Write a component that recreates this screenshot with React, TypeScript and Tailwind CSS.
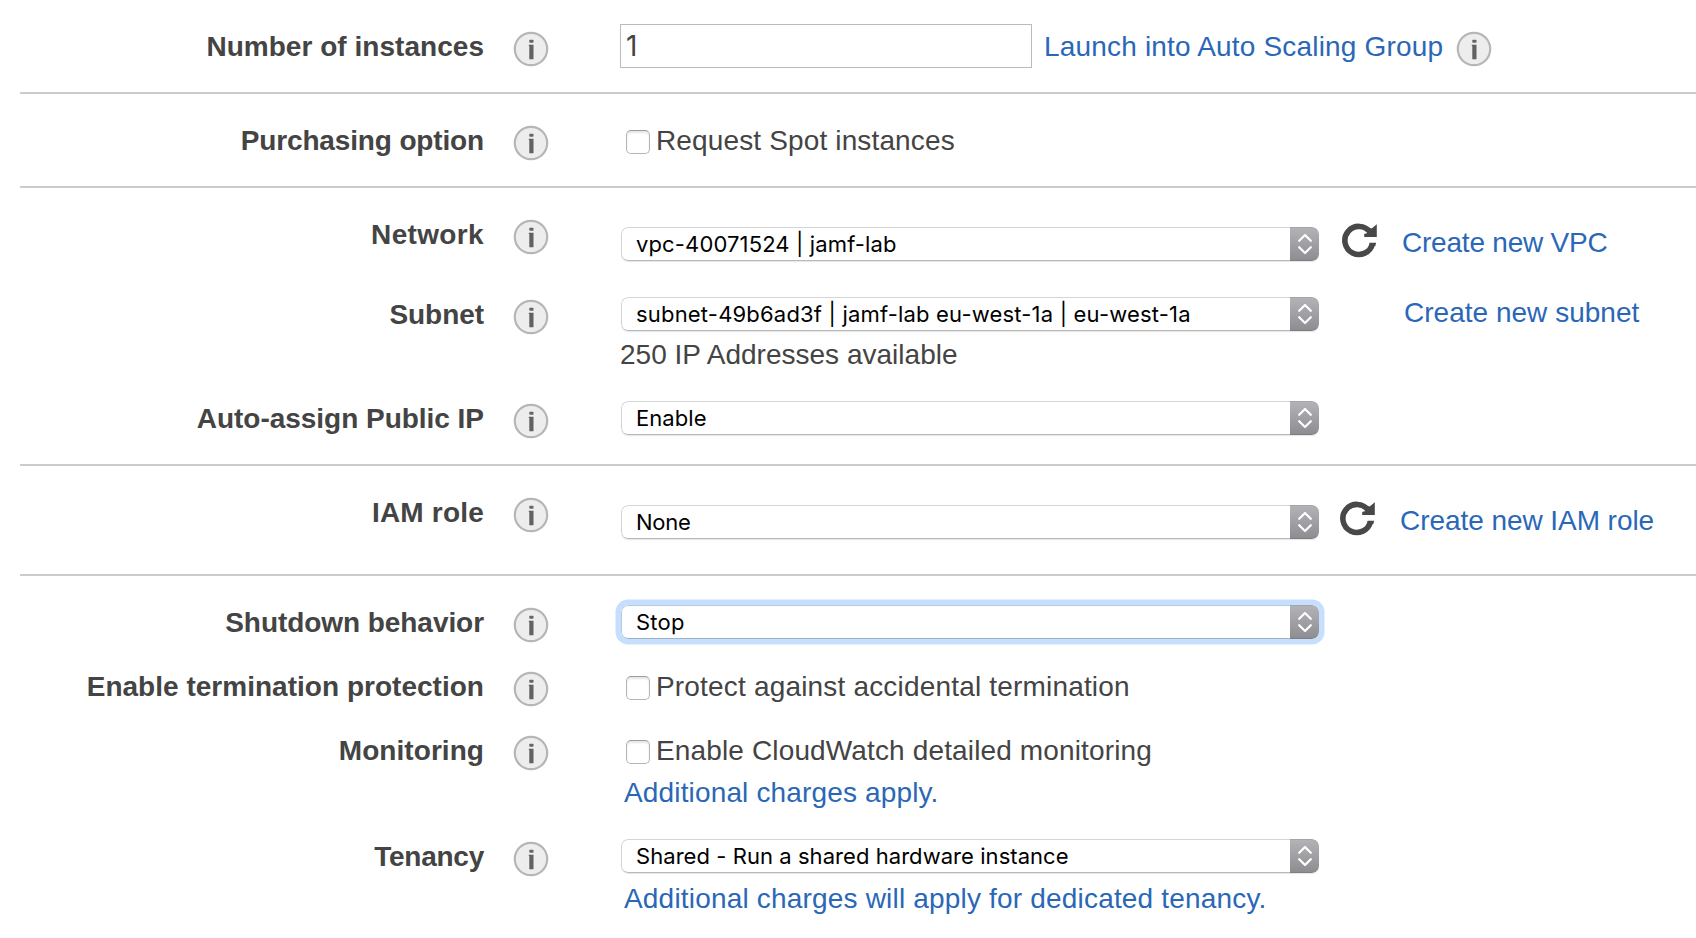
import type { ReactNode } from "react";

function InfoIcon({ className = "" }: { className?: string }) {
  return (
    <svg viewBox="0 0 36 36" className={`h-9 w-9 shrink-0 ${className}`} aria-hidden="true">
      <circle cx="18" cy="18" r="16.2" fill="#ededed" stroke="#b6b6b6" strokeWidth="2.2" />
      <rect x="16.3" y="8.7" width="4.2" height="3" rx="0.8" fill="#666" />
      <path d="M15.8 13.8h4.7v14.4h-4.2V15h-.5z" fill="#626262" />
    </svg>
  );
}

function RefreshIcon({ className = "" }: { className?: string }) {
  return (
    <svg viewBox="0 0 36 36" className={`h-9 w-9 shrink-0 ${className}`} aria-hidden="true">
      <path d="M29.2 10.2A14 14 0 1 0 31.5 21.6" fill="none" stroke="#484848" strokeWidth="5.6" />
      <path d="M28.6 20.8h6.6l-1 3.4-5.8-.8z" fill="#484848" />
      <path d="M35.8 2.2v12.8H23.2v-3l4-1.2-1-4 4.8-.6z" fill="#484848" />
    </svg>
  );
}

type RowProps = {
  label: string;
  labelClass?: string;
  className: string;
  children: ReactNode;
};

function Row({ label, labelClass = "", className, children }: RowProps) {
  return (
    <div className={`flex items-start ${className}`}>
      <div className={`w-[484px] shrink-0 text-right font-bold ${labelClass}`}>{label}</div>
      <InfoIcon className="mt-px ml-[29px]" />
      <div className="ml-[71px] flex flex-col items-start">{children}</div>
    </div>
  );
}

function Section({ className, children }: { className: string; children: ReactNode }) {
  return (
    <section className={`ml-5 border-b-2 border-[#cbcbcb] pt-[30px] ${className}`}>
      <div className="-ml-5">{children}</div>
    </section>
  );
}

function Select({ value, className = "", focused = false }: { value: string; className?: string; focused?: boolean }) {
  return (
    <button
      type="button"
      className={`ml-px flex h-[34px] w-[698px] shrink-0 overflow-hidden rounded-[7px] text-left ${
        focused
          ? "shadow-[0_0_0_5.5px_#c5dffd]"
          : "shadow-[0_1px_1px_rgba(0,0,0,0.1)]"
      }`}
    >
      <span
        className={`h-[34px] flex-1 rounded-l-[7px] border border-r-0 bg-white pl-[14px] font-[Inter,sans-serif] text-[22px] leading-[33px] whitespace-nowrap text-black ${
          focused ? "border-[#b5cbe5] border-b-[#9fb2ca]" : "border-[#d4d4d4] border-b-[#b8b8b8]"
        } ${className}`}
      >
        {value}
      </span>
      <span className="flex h-[34px] w-[29px] items-center justify-center rounded-r-[7px] border-t border-b border-t-[#a5a4a9] border-b-[#7f7e83] bg-linear-to-b from-[#b3b2b7] to-[#8e8d92]">
        <svg viewBox="0 0 14 22" className="h-[22px] w-[14px]" fill="none" stroke="#fff" strokeWidth="2.2" strokeLinecap="round" strokeLinejoin="round" aria-hidden="true">
          <path d="M1.2 7.8 7 2l5.8 5.8M1.2 14.2 7 20l5.8-5.8" />
        </svg>
      </span>
    </button>
  );
}

function Checkbox({ label, className }: { label: string; className: string }) {
  return (
    <label className="flex items-start">
      <input
        type="checkbox"
        className="mt-[6px] ml-[6px] h-6 w-6 shrink-0 appearance-none rounded-[5px] border border-[#b4b4b4] border-t-[#9d9d9d] bg-white shadow-[inset_0_2px_2px_rgba(0,0,0,0.1)]"
      />
      <span className={`ml-[6px] whitespace-nowrap ${className}`}>{label}</span>
    </label>
  );
}

function Link({ className, children }: { className: string; children: ReactNode }) {
  return (
    <a href="#" className={`shrink-0 whitespace-nowrap text-[#2a67b7] ${className}`}>
      {children}
    </a>
  );
}

export default function App() {
  return (
    <main className="h-[938px] w-[1696px] overflow-hidden bg-white font-['Liberation_Sans',Arial,sans-serif] text-[28px] leading-[34px] text-[#444]">
      <Section className="h-[94px]">
        <Row label="Number of instances" labelClass="tracking-[0.035px]" className="h-16">
          <div className="-mt-[6px] flex items-start">
            <input
              type="text"
              defaultValue="1"
              aria-label="Number of instances"
              className="h-11 w-[412px] border border-[#bbb] bg-white pl-[5px] font-[Inter,sans-serif] outline-none"
            />
            <Link className="mt-[6px] ml-[12px] tracking-[0.179px]">Launch into Auto Scaling Group</Link>
            <InfoIcon className="mt-[7px] ml-[13px]" />
          </div>
        </Row>
      </Section>

      <Section className="h-[94px]">
        <Row label="Purchasing option" labelClass="tracking-[-0.15px]" className="h-16">
          <Checkbox label="Request Spot instances" className="tracking-[0.14px]" />
        </Row>
      </Section>

      <Section className="h-[278px]">
        <Row label="Network" labelClass="tracking-[0.35px]" className="h-20">
          <div className="mt-[9px] flex items-start">
            <Select value="vpc-40071524 | jamf-lab" className="tracking-[0.133px]" />
            <RefreshIcon className="-mt-[5px] ml-[22px]" />
            <Link className="-mt-px ml-[25px] tracking-[-0.217px]">Create new VPC</Link>
          </div>
        </Row>
        <Row label="Subnet" labelClass="tracking-[-0.05px]" className="h-[104px]">
          <div className="-mt-px flex items-start">
            <Select value="subnet-49b6ad3f | jamf-lab eu-west-1a | eu-west-1a" className="tracking-[0.19px]" />
            <Link className="-mt-px ml-[85px] tracking-[0.015px]">Create new subnet</Link>
          </div>
          <p className="mt-[7px] tracking-[0.01px]">250 IP Addresses available</p>
        </Row>
        <Row label="Auto-assign Public IP" labelClass="tracking-[-0.03px]" className="h-16">
          <div className="-mt-px">
            <Select value="Enable" className="tracking-[0.06px]" />
          </div>
        </Row>
      </Section>

      <Section className="h-[110px]">
        <Row label="IAM role" labelClass="tracking-[0.2px]" className="h-20">
          <div className="mt-[9px] flex items-start">
            <Select value="None" className="tracking-[-0.255px]" />
            <RefreshIcon className="-mt-[5px] ml-[20px]" />
            <Link className="-mt-px ml-[25px] tracking-[-0.06px]">Create new IAM role</Link>
          </div>
        </Row>
      </Section>

      <div className="pt-[30px]">
        <Row label="Shutdown behavior" labelClass="tracking-[-0.06px]" className="h-16">
          <div className="-mt-px">
            <Select focused value="Stop" className="tracking-[0.237px]" />
          </div>
        </Row>
        <Row label="Enable termination protection" labelClass="tracking-[0.02px]" className="h-16">
          <Checkbox label="Protect against accidental termination" className="tracking-[0.18px]" />
        </Row>
        <Row label="Monitoring" labelClass="tracking-[0.054px]" className="h-[106px]">
          <Checkbox label="Enable CloudWatch detailed monitoring" className="tracking-[0.14px]" />
          <Link className="mt-[8px] ml-1 tracking-[0.15px]">Additional charges apply.</Link>
        </Row>
        <Row label="Tenancy" labelClass="tracking-[-0.25px]" className="h-[98px]">
          <div className="-mt-px">
            <Select value="Shared - Run a shared hardware instance" className="tracking-[0.055px]" />
          </div>
          <Link className="mt-[9px] ml-1 tracking-[0.185px]">Additional charges will apply for dedicated tenancy.</Link>
        </Row>
      </div>
    </main>
  );
}
